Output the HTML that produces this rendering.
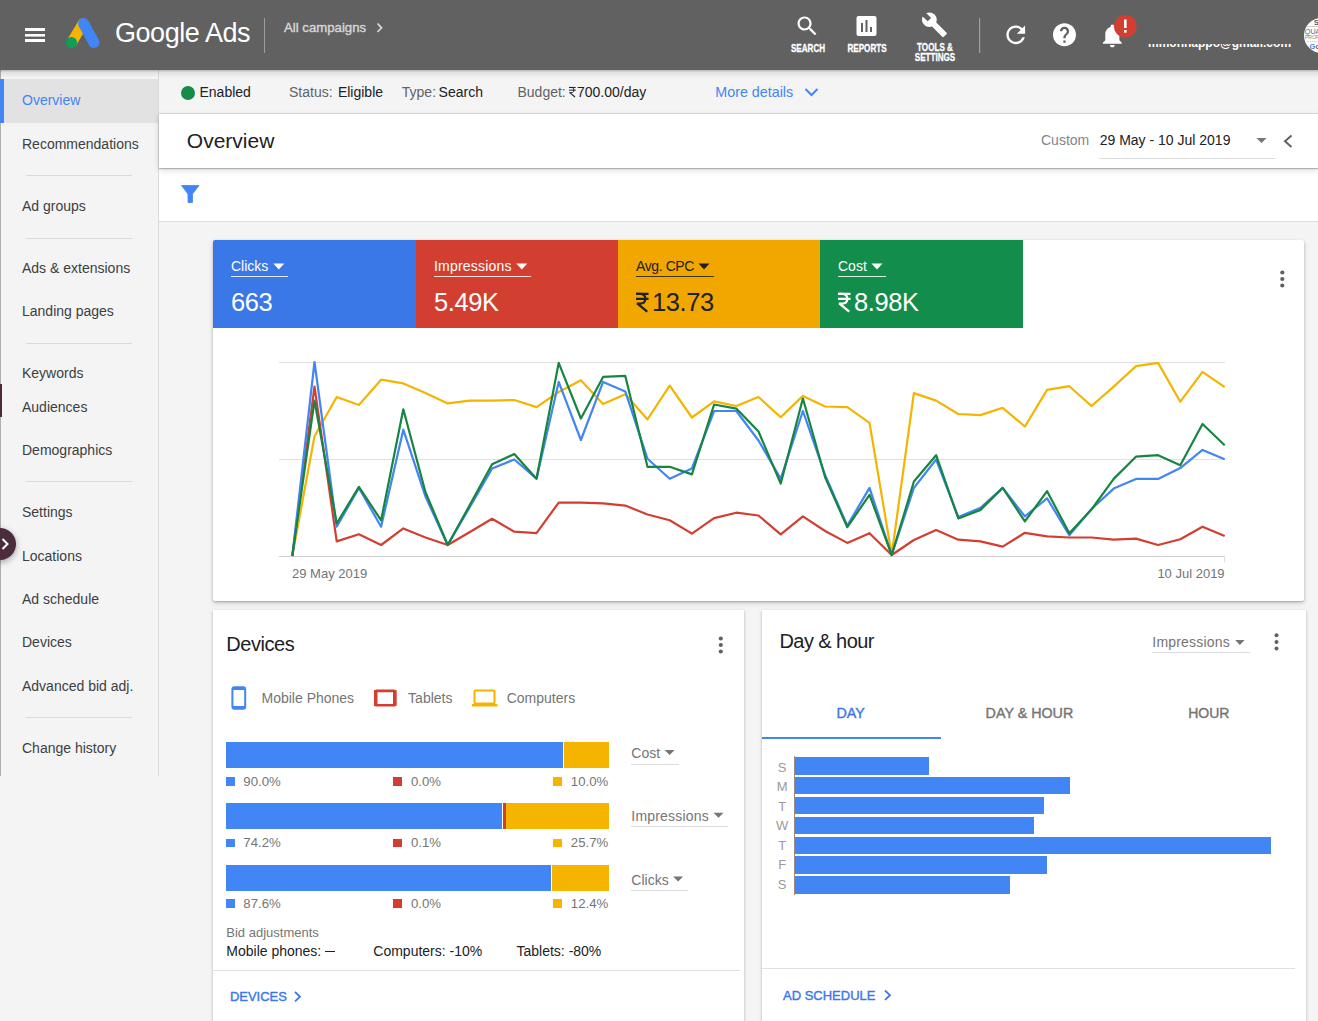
<!DOCTYPE html>
<html><head><meta charset="utf-8">
<style>
*{margin:0;padding:0;box-sizing:border-box}
html,body{width:1318px;height:1021px;overflow:hidden;background:#f4f4f4;font-family:"Liberation Sans",sans-serif;color:#202124;position:relative}
.a{position:absolute;white-space:nowrap;line-height:1}
.r{position:absolute}
.a,svg{z-index:3}
svg{position:absolute;overflow:visible}
</style></head>
<body>
<div class="r" style="left:0px;top:0px;width:1318px;height:70px;background:#616161;"></div>
<svg style="left:0;top:0" width="1318" height="70">
<rect x="25" y="28" width="20" height="3" fill="#fff"/>
<rect x="25" y="34" width="20" height="2.6" fill="#fff"/>
<rect x="25" y="39" width="20" height="3" fill="#fff"/>
<line x1="72" y1="42" x2="83" y2="23.5" stroke="#f4b400" stroke-width="10.5" stroke-linecap="round"/>
<line x1="83.5" y1="23.5" x2="94" y2="42.5" stroke="#4285f4" stroke-width="11" stroke-linecap="round"/>
<circle cx="71.5" cy="42.5" r="5.5" fill="#0f9d58"/>
<rect x="264" y="18" width="1" height="35" fill="#a39aa0"/>
<polyline points="377.5,23.5 381.5,27.8 377.5,32" fill="none" stroke="#d6d6d6" stroke-width="1.8"/>
<rect x="979" y="18" width="1.2" height="35" fill="#a39aa0"/>
<!-- search -->
<path transform="translate(794.3,13.2) scale(1.08)" fill="#fff" d="M15.5 14h-.79l-.28-.27C15.41 12.59 16 11.11 16 9.5 16 5.91 13.09 3 9.5 3S3 5.91 3 9.5 5.91 16 9.5 16c1.61 0 3.09-.59 4.23-1.57l.27.28v.79l5 4.99L20.49 19l-4.99-5zm-6 0C7.01 14 5 11.990 5 9.5S7.01 5 9.5 5 14 7.01 14 9.5 11.99 14 9.5 14z"/>
<!-- reports -->
<rect x="856.5" y="16" width="20" height="20" rx="2" fill="#fff"/>
<rect x="861" y="23" width="2" height="9" fill="#616161"/>
<rect x="865.5" y="20" width="2" height="12" fill="#616161"/>
<rect x="870" y="27" width="2" height="5" fill="#616161"/>
<!-- wrench -->
<path transform="translate(920.9,11.2) scale(1.13)" fill="#fff" d="M22.7 19l-9.1-9.1c.9-2.3.4-5-1.5-6.9-2-2-5-2.4-7.4-1.3L9 6 6 9 1.6 4.7C.4 7.1.9 10.1 2.9 12.1c1.9 1.9 4.6 2.4 6.9 1.5l9.1 9.1c.4.4 1 .4 1.4 0l2.3-2.3c.5-.4.5-1.1.1-1.4z"/>
<!-- refresh -->
<path transform="translate(1001.7,20.8) scale(1.17)" fill="#fff" d="M17.65 6.35C16.2 4.9 14.21 4 12 4c-4.42 0-7.99 3.58-7.99 8s3.57 8 7.99 8c3.73 0 6.84-2.55 7.73-6h-2.08c-.82 2.33-3.04 4-5.65 4-3.31 0-6-2.69-6-6s2.690-6 6-6c1.66 0 3.14.69 4.22 1.78L13 11h7V4l-2.35 2.35z"/>
<!-- help -->
<path transform="translate(1050.7,21) scale(1.15)" fill="#fff" d="M12 2C6.48 2 2 6.48 2 12s4.48 10 10 10 10-4.48 10-10S17.52 2 12 2zm1 17h-2v-2h2v2zm2.07-7.75l-.9.92C13.45 12.9 13 13.5 13 15h-2v-.5c0-1.1.45-2.1 1.17-2.83l1.24-1.26c.37-.36.59-.86.59-1.41 0-1.1-.9-2-2-2s-2 .9-2 2H8c0-2.21 1.79-4 4-4s4 1.79 4 4c0 .88-.36 1.68-.93 2.25z"/>
<!-- bell -->
<path transform="translate(1098.3,21.5) scale(1.17)" fill="#fff" d="M12 22c1.1 0 2-.9 2-2h-4c0 1.1.89 2 2 2zm6-6v-5c0-3.07-1.64-5.64-4.5-6.32V4c0-.83-.67-1.5-1.5-1.5s-1.5.67-1.5 1.5v.68C7.63 5.36 6 7.92 6 11v5l-2 2v1h16v-1l-2-2z"/>
<circle cx="1125.3" cy="26.2" r="11.3" fill="#d23f31"/>
<rect x="1124" y="19.5" width="2.6" height="8.5" fill="#fff"/>
<rect x="1124" y="30" width="2.6" height="2.6" fill="#fff"/>
<!-- avatar -->
<clipPath id="av"><circle cx="1321.6" cy="35.4" r="17.6"/></clipPath><circle cx="1321.6" cy="35.4" r="17.6" fill="#fff"/><g clip-path="url(#av)" font-family="Liberation Sans"><text x="1314" y="24.6" font-size="7" font-weight="bold" fill="#5a5058">S</text><rect x="1306" y="26" width="14" height="0.8" fill="#c8c0c8"/><text x="1304.8" y="34" font-size="7.2" fill="#6a6068">QUA</text><text x="1305" y="39.4" font-size="5" fill="#888">PROFE</text><rect x="1306" y="41" width="14" height="0.6" fill="#ccc"/><text x="1309.5" y="48.7" font-size="7.5" font-weight="bold" fill="#4285f4">G</text><text x="1315.5" y="48.7" font-size="7.5" font-weight="bold" fill="#d23f31">o</text></g>
</svg>
<div class="a" style="left:115.00px;top:20.14px;font-size:27px;color:#fff;letter-spacing:-0.45px;">Google Ads</div>
<div class="a" style="left:284.00px;top:21.12px;font-size:13.2px;color:#d6d6d6;-webkit-text-stroke:0.4px currentColor;">All campaigns</div>
<div class="a" style="left:808.00px;top:44.13px;font-size:10px;color:#fff;font-weight:bold;transform:translateX(-50%) scaleX(0.81);-webkit-text-stroke:0.3px #fff;">SEARCH</div>
<div class="a" style="left:866.70px;top:44.13px;font-size:10px;color:#fff;font-weight:bold;transform:translateX(-50%) scaleX(0.81);-webkit-text-stroke:0.3px #fff;">REPORTS</div>
<div class="a" style="left:935.00px;top:43.43px;font-size:10px;color:#fff;font-weight:bold;transform:translateX(-50%) scaleX(0.81);-webkit-text-stroke:0.3px #fff;">TOOLS &amp;</div>
<div class="a" style="left:934.70px;top:53.33px;font-size:10px;color:#fff;font-weight:bold;transform:translateX(-50%) scaleX(0.81);-webkit-text-stroke:0.3px #fff;">SETTINGS</div>
<div class="r" style="left:1148px;top:43.5px;width:145px;height:8px;overflow:hidden"><div class="a" style="left:0;top:-6.66px;font-size:12px;font-weight:bold;color:#fff">mmohnappo@gmail.com</div></div>
<div class="r" style="left:0px;top:70px;width:159px;height:706px;background:#f4f4f4;border-right:1px solid #dadada;"></div>
<div class="r" style="left:0px;top:70px;width:1px;height:706px;background:#b0b0b0;"></div>
<div class="r" style="left:0px;top:79px;width:158px;height:44px;background:#e2e2e2;"></div>
<div class="r" style="left:0px;top:384px;width:1.5px;height:33px;background:#4a2c3c;"></div>
<div class="r" style="left:0px;top:79px;width:4px;height:44px;background:#4285f4;"></div>
<div class="a" style="left:22.00px;top:93.45px;font-size:14px;color:#4285f4;">Overview</div>
<div class="a" style="left:22.00px;top:137.15px;font-size:14px;color:#3c4043;">Recommendations</div>
<div class="a" style="left:22.00px;top:199.15px;font-size:14px;color:#3c4043;">Ad groups</div>
<div class="a" style="left:22.00px;top:261.15px;font-size:14px;color:#3c4043;">Ads &amp; extensions</div>
<div class="a" style="left:22.00px;top:304.15px;font-size:14px;color:#3c4043;">Landing pages</div>
<div class="a" style="left:22.00px;top:366.15px;font-size:14px;color:#3c4043;">Keywords</div>
<div class="a" style="left:22.00px;top:400.15px;font-size:14px;color:#3c4043;">Audiences</div>
<div class="a" style="left:22.00px;top:443.15px;font-size:14px;color:#3c4043;">Demographics</div>
<div class="a" style="left:22.00px;top:505.15px;font-size:14px;color:#3c4043;">Settings</div>
<div class="a" style="left:22.00px;top:549.15px;font-size:14px;color:#3c4043;">Locations</div>
<div class="a" style="left:22.00px;top:592.15px;font-size:14px;color:#3c4043;">Ad schedule</div>
<div class="a" style="left:22.00px;top:635.15px;font-size:14px;color:#3c4043;">Devices</div>
<div class="a" style="left:22.00px;top:679.15px;font-size:14px;color:#3c4043;">Advanced bid adj.</div>
<div class="a" style="left:22.00px;top:741.15px;font-size:14px;color:#3c4043;">Change history</div>
<div class="r" style="left:26px;top:175px;width:106px;height:1px;background:#dadada;"></div>
<div class="r" style="left:26px;top:238px;width:106px;height:1px;background:#dadada;"></div>
<div class="r" style="left:26px;top:343px;width:106px;height:1px;background:#dadada;"></div>
<div class="r" style="left:26px;top:481px;width:106px;height:1px;background:#dadada;"></div>
<div class="r" style="left:26px;top:717px;width:106px;height:1px;background:#dadada;"></div>
<div class="r" style="left:-16px;top:528px;width:32px;height:32px;border-radius:50%;background:#4a2c3c;box-shadow:0 2px 6px rgba(0,0,0,.35)"></div>
<svg style="left:0;top:0" width="20" height="600"><polyline points="2.5,539 7.5,544 2.5,549" fill="none" stroke="#fff" stroke-width="2"/></svg>
<div class="r" style="left:159px;top:70px;width:1159px;height:44px;background:#f4f4f4;border-bottom:1px solid #dcdcdc;"></div>
<div class="r" style="left:0;top:70px;width:1318px;height:8px;background:linear-gradient(rgba(0,0,0,.25),rgba(0,0,0,.08) 30%,rgba(0,0,0,0))"></div>
<div class="r" style="left:181px;top:86px;width:14px;height:14px;border-radius:50%;background:#188a4a"></div>
<div class="a" style="left:199.50px;top:84.75px;font-size:14px;color:#202124;">Enabled</div>
<div class="a" style="left:289.00px;top:84.75px;font-size:14px;color:#5f6368;">Status:</div>
<div class="a" style="left:337.90px;top:84.75px;font-size:14px;color:#202124;">Eligible</div>
<div class="a" style="left:401.80px;top:84.75px;font-size:14px;color:#5f6368;">Type:</div>
<div class="a" style="left:438.60px;top:84.75px;font-size:14px;color:#202124;">Search</div>
<div class="a" style="left:517.50px;top:84.75px;font-size:14px;color:#5f6368;">Budget:</div>
<div class="a" style="left:715.30px;top:85.39px;font-size:14.3px;color:#4285f4;">More details</div>
<svg style="left:0;top:0" width="1318" height="200"><polyline points="805.5,89 811.5,95 817.5,89" fill="none" stroke="#4285f4" stroke-width="2"/></svg>
<div class="r" style="left:159px;top:114px;width:1159px;height:54px;background:#fff;box-shadow:0 1px 1px rgba(0,0,0,.22),0 2px 6px rgba(0,0,0,.16);z-index:2;"></div>
<div class="a" style="left:186.80px;top:130.42px;font-size:21px;color:#202124;">Overview</div>
<div class="a" style="left:1041.00px;top:133.15px;font-size:14px;color:#80868b;">Custom</div>
<div class="a" style="left:1099.70px;top:133.15px;font-size:14px;color:#202124;">29 May - 10 Jul 2019</div>
<div class="r" style="left:1099px;top:158px;width:176px;height:1px;background:#dadce0;z-index:3;"></div>
<svg style="left:0;top:0" width="1318" height="200"><polygon points="1256.5,138 1266.5,138 1261.5,143" fill="#757575"/><polyline points="1291.5,135.5 1285,141.2 1291.5,147" fill="none" stroke="#5f6368" stroke-width="2"/></svg>
<div class="r" style="left:159px;top:168px;width:1159px;height:54px;background:#fff;border-bottom:1px solid #dcdcdc;"></div>
<svg style="left:0;top:0" width="1318" height="300"><path d="M181.5,185.5 L199,185.5 L192.5,194 L192.5,202.5 L188,202.5 L188,194 Z" fill="#4285f4" stroke="#4285f4" stroke-width="0.8" stroke-linejoin="round"/></svg>
<div class="r" style="left:213px;top:240px;width:1091px;height:361px;background:#fff;border-radius:2px;box-shadow:0 1px 2px rgba(0,0,0,.2),0 2px 5px rgba(0,0,0,.18)"></div>
<div class="r" style="left:213px;top:240px;width:203px;height:88px;background:#3b78e7;border-radius:2px 0 0 0;"></div>
<div class="a" style="left:231.00px;top:259.15px;font-size:14px;color:#fff;">Clicks</div>
<svg style="left:0;top:0" width="1" height="1"><polygon points="273.3,263.5 284.3,263.5 278.8,269.5" fill="#fff"/></svg>
<div class="r" style="left:231px;top:276px;width:57px;height:1px;background:#fff;opacity:.85;"></div>
<div class="a" style="left:231.00px;top:290.11px;font-size:25.5px;color:#fff;letter-spacing:-0.4px;">663</div>
<div class="r" style="left:416px;top:240px;width:202px;height:88px;background:#d23f31;"></div>
<div class="a" style="left:434.00px;top:259.15px;font-size:14px;color:#fff;letter-spacing:0.2px;">Impressions</div>
<svg style="left:0;top:0" width="1" height="1"><polygon points="516.3,263.5 527.3,263.5 521.8,269.5" fill="#fff"/></svg>
<div class="r" style="left:434px;top:276px;width:97px;height:1px;background:#fff;opacity:.85;"></div>
<div class="a" style="left:434.00px;top:290.11px;font-size:25.5px;color:#fff;letter-spacing:-0.4px;">5.49K</div>
<div class="r" style="left:618px;top:240px;width:202px;height:88px;background:#f2a600;"></div>
<div class="a" style="left:636.00px;top:259.15px;font-size:14px;color:#202124;letter-spacing:-0.4px;">Avg. CPC</div>
<svg style="left:0;top:0" width="1" height="1"><polygon points="698.5,263.5 709.5,263.5 704.0,269.5" fill="#202124"/></svg>
<div class="r" style="left:636px;top:276px;width:78px;height:1px;background:#202124;opacity:.85;"></div>
<svg style="left:636.00px;top:293.00px" width="12.53" height="18.70" viewBox="0 0 67 100"><path d="M0,4.5H67M0,31.5H67" stroke="#202124" stroke-width="11.5" fill="none"/><path d="M0,4.5H22C42,4.5 50,16 50,31C50,47 40,57 22,57H4" stroke="#202124" stroke-width="11.5" fill="none"/><path d="M8,57L60,100" stroke="#202124" stroke-width="12.7" fill="none"/></svg>
<div class="a" style="left:652.00px;top:290.11px;font-size:25.5px;color:#202124;letter-spacing:-0.4px;">13.73</div>
<div class="r" style="left:820px;top:240px;width:203px;height:88px;background:#138d4c;"></div>
<div class="a" style="left:838.00px;top:259.15px;font-size:14px;color:#fff;">Cost</div>
<svg style="left:0;top:0" width="1" height="1"><polygon points="871.5,263.5 882.5,263.5 877.0,269.5" fill="#fff"/></svg>
<div class="r" style="left:838px;top:276px;width:48px;height:1px;background:#fff;opacity:.85;"></div>
<svg style="left:838.00px;top:293.00px" width="12.53" height="18.70" viewBox="0 0 67 100"><path d="M0,4.5H67M0,31.5H67" stroke="#fff" stroke-width="11.5" fill="none"/><path d="M0,4.5H22C42,4.5 50,16 50,31C50,47 40,57 22,57H4" stroke="#fff" stroke-width="11.5" fill="none"/><path d="M8,57L60,100" stroke="#fff" stroke-width="12.7" fill="none"/></svg>
<div class="a" style="left:854.00px;top:290.11px;font-size:25.5px;color:#fff;letter-spacing:-0.4px;">8.98K</div>
<svg style="left:0;top:0" width="1" height="1"><circle cx="1282.3" cy="272.5" r="2.1" fill="#616161"/><circle cx="1282.3" cy="279" r="2.1" fill="#616161"/><circle cx="1282.3" cy="285.5" r="2.1" fill="#616161"/></svg>
<svg style="left:0;top:0" width="1" height="1"><rect x="279" y="362" width="946" height="1" fill="#e0e0e0"/><rect x="279" y="459" width="946" height="1" fill="#e0e0e0"/><rect x="279" y="556" width="946" height="1" fill="#d0d0d0"/><rect x="1224" y="555.5" width="1" height="7" fill="#e0e0e0"/><polyline points="292.3,556.0 314.5,436.2 336.7,397.0 358.9,405.0 381.1,379.7 403.3,383.4 425.5,393.0 447.7,403.4 469.9,400.6 492.1,400.6 514.3,400.0 536.5,407.1 558.7,392.0 580.9,380.2 603.1,403.9 625.3,394.2 647.5,419.4 669.7,385.6 691.9,417.5 714.1,401.3 736.3,406.0 758.5,397.0 780.7,417.2 802.9,395.9 825.1,406.5 847.3,407.1 869.5,422.8 891.7,555.0 913.9,393.1 936.1,400.6 958.3,414.0 980.5,415.1 1002.7,407.8 1024.9,426.5 1047.1,389.9 1069.3,386.2 1091.5,406.0 1113.7,386.6 1135.9,366.2 1158.1,362.9 1180.3,401.7 1202.5,371.9 1224.7,387.1" fill="none" stroke="#f4b400" stroke-width="2.2" stroke-linejoin="round"/><polyline points="292.3,556.0 314.5,386.6 336.7,541.4 358.9,534.3 381.1,545.0 403.3,528.4 425.5,537.5 447.7,545.0 469.9,532.0 492.1,518.8 514.3,531.7 536.5,533.2 558.7,502.6 580.9,502.6 603.1,503.4 625.3,505.6 647.5,514.5 669.7,520.3 691.9,533.6 714.1,518.1 736.3,512.7 758.5,515.5 780.7,534.3 802.9,516.4 825.1,531.0 847.3,542.9 869.5,533.2 891.7,555.0 913.9,540.0 936.1,530.0 958.3,539.7 980.5,541.4 1002.7,546.6 1024.9,532.8 1047.1,536.4 1069.3,537.5 1091.5,537.5 1113.7,539.7 1135.9,538.6 1158.1,545.0 1180.3,539.2 1202.5,526.7 1224.7,536.1" fill="none" stroke="#d23f31" stroke-width="2.2" stroke-linejoin="round"/><polyline points="292.3,556.0 314.5,362.0 336.7,526.7 358.9,488.0 381.1,526.7 403.3,429.7 425.5,496.6 447.7,545.0 469.9,507.0 492.1,468.5 514.3,459.5 536.5,478.7 558.7,381.9 580.9,440.0 603.1,381.9 625.3,391.4 647.5,458.8 669.7,478.7 691.9,468.5 714.1,411.0 736.3,411.0 758.5,440.5 780.7,478.9 802.9,411.0 825.1,475.0 847.3,525.6 869.5,487.9 891.7,555.0 913.9,487.9 936.1,459.5 958.3,517.0 980.5,507.8 1002.7,487.9 1024.9,516.4 1047.1,498.3 1069.3,535.3 1091.5,509.0 1113.7,488.6 1135.9,478.9 1158.1,478.9 1180.3,468.1 1202.5,449.9 1224.7,459.3" fill="none" stroke="#4285f4" stroke-width="2.2" stroke-linejoin="round"/><polyline points="292.3,556.0 314.5,400.6 336.7,523.5 358.9,486.9 381.1,520.3 403.3,409.3 425.5,492.2 447.7,545.0 469.9,504.8 492.1,464.2 514.3,454.1 536.5,478.7 558.7,362.9 580.9,418.5 603.1,376.9 625.3,375.9 647.5,466.8 669.7,466.8 691.9,474.4 714.1,404.5 736.3,408.6 758.5,431.5 780.7,483.6 802.9,398.5 825.1,477.2 847.3,527.2 869.5,494.8 891.7,555.0 913.9,481.5 936.1,455.2 958.3,518.5 980.5,509.9 1002.7,487.9 1024.9,521.3 1047.1,491.2 1069.3,533.2 1091.5,509.5 1113.7,478.9 1135.9,456.7 1158.1,455.2 1180.3,465.3 1202.5,424.0 1224.7,445.2" fill="none" stroke="#178542" stroke-width="2.2" stroke-linejoin="round"/></svg>
<div class="a" style="left:292.00px;top:566.99px;font-size:13px;color:#70757a;">29 May 2019</div>
<div class="a" style="right:93.40px;top:566.99px;font-size:13px;color:#70757a;">10 Jul 2019</div>
<svg style="left:569.00px;top:86.60px" width="6.70" height="10.00" viewBox="0 0 67 100"><path d="M0,4.5H67M0,31.5H67" stroke="#202124" stroke-width="10" fill="none"/><path d="M0,4.5H22C42,4.5 50,16 50,31C50,47 40,57 22,57H4" stroke="#202124" stroke-width="10" fill="none"/><path d="M8,57L60,100" stroke="#202124" stroke-width="11.0" fill="none"/></svg>
<div class="a" style="left:577.00px;top:84.75px;font-size:14px;color:#202124;">700.00/day</div>
<div class="r" style="left:213px;top:610px;width:531px;height:420px;background:#fff;box-shadow:0 1px 2px rgba(0,0,0,.2),0 1px 4px rgba(0,0,0,.12)"></div>
<div class="r" style="left:761.5px;top:610px;width:544.5px;height:420px;background:#fff;box-shadow:0 1px 2px rgba(0,0,0,.2),0 1px 4px rgba(0,0,0,.12)"></div>
<div class="a" style="left:226.30px;top:634.07px;font-size:20px;color:#202124;letter-spacing:-0.44px;">Devices</div>
<svg style="left:0;top:0" width="1" height="1"><circle cx="720.8" cy="638.5" r="2.1" fill="#616161"/><circle cx="720.8" cy="645" r="2.1" fill="#616161"/><circle cx="720.8" cy="651.5" r="2.1" fill="#616161"/></svg>
<svg style="left:0;top:0" width="1" height="1"><rect x="232.4" y="687.2" width="12.8" height="21.5" rx="2" fill="none" stroke="#4285f4" stroke-width="2"/><rect x="232.4" y="688" width="12.8" height="2" fill="#4285f4"/><rect x="232.4" y="706" width="12.8" height="2.2" fill="#4285f4"/><rect x="375.3" y="690.9" width="19.8" height="14.4" rx="1.5" fill="none" stroke="#d23f31" stroke-width="2.6"/><rect x="374" y="690" width="3.5" height="16" fill="#d23f31"/><rect x="393" y="690" width="3.5" height="16" fill="#d23f31"/><rect x="474.5" y="690.5" width="20" height="13" rx="1" fill="none" stroke="#f4b400" stroke-width="2"/><rect x="472" y="704" width="25.5" height="2.5" fill="#f4b400"/></svg>
<div class="a" style="left:261.50px;top:691.15px;font-size:14px;color:#757575;">Mobile Phones</div>
<div class="a" style="left:408.10px;top:691.15px;font-size:14px;color:#757575;">Tablets</div>
<div class="a" style="left:506.70px;top:691.15px;font-size:14px;color:#757575;">Computers</div>
<div class="r" style="left:226.3px;top:741.8px;width:336.7px;height:26px;background:#4285f4;"></div>
<div class="r" style="left:564px;top:741.8px;width:44.9px;height:26px;background:#f4b400;"></div>
<div class="r" style="left:226.3px;top:777px;width:8.5px;height:8.5px;background:#4285f4;"></div>
<div class="a" style="left:243.30px;top:774.82px;font-size:13.2px;color:#757575;">90.0%</div>
<div class="r" style="left:393.3px;top:777px;width:8.5px;height:8.5px;background:#d23f31;"></div>
<div class="a" style="left:411.00px;top:774.82px;font-size:13.2px;color:#757575;">0.0%</div>
<div class="r" style="left:553.2px;top:777px;width:8.5px;height:8.5px;background:#f4b400;"></div>
<div class="a" style="right:709.80px;top:774.82px;font-size:13.2px;color:#757575;">10.0%</div>
<div class="a" style="left:631.30px;top:746.15px;font-size:14px;color:#757575;">Cost</div>
<svg style="left:0;top:0" width="1" height="1"><polygon points="664.6,750 674.6,750 669.6,755" fill="#757575"/></svg>
<div class="r" style="left:631px;top:763.6px;width:48.1px;height:1px;background:#dadce0;"></div>
<div class="r" style="left:226.3px;top:803px;width:275.5px;height:26px;background:#4285f4;"></div>
<div class="r" style="left:502.9px;top:803px;width:3.2px;height:26px;background:#d23f31;"></div>
<div class="r" style="left:506.1px;top:803px;width:102.8px;height:26px;background:#f4b400;"></div>
<div class="r" style="left:226.3px;top:838.6px;width:8.5px;height:8.5px;background:#4285f4;"></div>
<div class="a" style="left:243.30px;top:836.42px;font-size:13.2px;color:#757575;">74.2%</div>
<div class="r" style="left:393.3px;top:838.6px;width:8.5px;height:8.5px;background:#d23f31;"></div>
<div class="a" style="left:411.00px;top:836.42px;font-size:13.2px;color:#757575;">0.1%</div>
<div class="r" style="left:553.2px;top:838.6px;width:8.5px;height:8.5px;background:#f4b400;"></div>
<div class="a" style="right:709.80px;top:836.42px;font-size:13.2px;color:#757575;">25.7%</div>
<div class="a" style="left:631.30px;top:808.85px;font-size:14px;color:#757575;letter-spacing:0.2px;">Impressions</div>
<svg style="left:0;top:0" width="1" height="1"><polygon points="713.5,812.7 723.5,812.7 718.5,817.7" fill="#757575"/></svg>
<div class="r" style="left:631px;top:826.4px;width:97.0px;height:1px;background:#dadce0;"></div>
<div class="r" style="left:226.3px;top:865px;width:324.4px;height:26px;background:#4285f4;"></div>
<div class="r" style="left:552px;top:865px;width:56.9px;height:26px;background:#f4b400;"></div>
<div class="r" style="left:226.3px;top:899.3px;width:8.5px;height:8.5px;background:#4285f4;"></div>
<div class="a" style="left:243.30px;top:897.12px;font-size:13.2px;color:#757575;">87.6%</div>
<div class="r" style="left:393.3px;top:899.3px;width:8.5px;height:8.5px;background:#d23f31;"></div>
<div class="a" style="left:411.00px;top:897.12px;font-size:13.2px;color:#757575;">0.0%</div>
<div class="r" style="left:553.2px;top:899.3px;width:8.5px;height:8.5px;background:#f4b400;"></div>
<div class="a" style="right:709.80px;top:897.12px;font-size:13.2px;color:#757575;">12.4%</div>
<div class="a" style="left:631.30px;top:872.75px;font-size:14px;color:#757575;">Clicks</div>
<svg style="left:0;top:0" width="1" height="1"><polygon points="673.1,876.6 683.1,876.6 678.1,881.6" fill="#757575"/></svg>
<div class="r" style="left:631px;top:890.3px;width:56.6px;height:1px;background:#dadce0;"></div>
<div class="a" style="left:226.30px;top:925.59px;font-size:13px;color:#757575;">Bid adjustments</div>
<div class="a" style="left:226.30px;top:943.85px;font-size:14px;color:#202124;">Mobile phones: <span style='display:inline-block;width:9.5px;height:1px;background:#202124;vertical-align:4px'></span></div>
<div class="a" style="left:373.30px;top:943.85px;font-size:14px;color:#202124;">Computers: -10%</div>
<div class="a" style="left:516.50px;top:943.85px;font-size:14px;color:#202124;">Tablets: -80%</div>
<div class="r" style="left:213px;top:970px;width:527px;height:1px;background:#e0e0e0;"></div>
<div class="a" style="left:229.90px;top:990.49px;font-size:13px;color:#3b78e7;-webkit-text-stroke:0.4px currentColor;">DEVICES</div>
<svg style="left:0;top:0" width="1" height="1"><polyline points="295,992 300,996.7 295,1001.4" fill="none" stroke="#3b78e7" stroke-width="1.8"/></svg>
<div class="a" style="left:779.50px;top:631.27px;font-size:20px;color:#202124;letter-spacing:-0.57px;">Day &amp; hour</div>
<div class="a" style="left:1152.30px;top:634.65px;font-size:14px;color:#757575;letter-spacing:0.2px;">Impressions</div>
<svg style="left:0;top:0" width="1" height="1"><polygon points="1235.2,640 1244.6,640 1239.9,645" fill="#757575"/><circle cx="1276.5" cy="635.3" r="2" fill="#616161"/><circle cx="1276.5" cy="641.9" r="2" fill="#616161"/><circle cx="1276.5" cy="648.5" r="2" fill="#616161"/></svg>
<div class="r" style="left:1152px;top:651.5px;width:98px;height:1px;background:#dadce0;"></div>
<div class="a" style="left:836.50px;top:706.09px;font-size:14.3px;color:#3b78e7;-webkit-text-stroke:0.4px currentColor;">DAY</div>
<div class="a" style="left:985.60px;top:706.09px;font-size:14.3px;color:#757575;-webkit-text-stroke:0.4px currentColor;">DAY &amp; HOUR</div>
<div class="a" style="left:1188.20px;top:706.35px;font-size:14px;color:#757575;-webkit-text-stroke:0.4px currentColor;">HOUR</div>
<div class="r" style="left:761.5px;top:737px;width:179.5px;height:2px;background:#4285f4;"></div>
<div class="r" style="left:794px;top:756px;width:1px;height:139px;background:#9e8a80;"></div>
<div class="r" style="left:795px;top:757.0px;width:133.6px;height:17.6px;background:#4285f4;"></div>
<div class="a" style="left:782.20px;transform:translateX(-50%);top:760.69px;font-size:13px;color:#9a9a9a;">S</div>
<div class="r" style="left:795px;top:776.88px;width:274.8px;height:17.6px;background:#4285f4;"></div>
<div class="a" style="left:782.20px;transform:translateX(-50%);top:780.21px;font-size:13px;color:#9a9a9a;">M</div>
<div class="r" style="left:795px;top:796.76px;width:249px;height:17.6px;background:#4285f4;"></div>
<div class="a" style="left:782.20px;transform:translateX(-50%);top:799.73px;font-size:13px;color:#9a9a9a;">T</div>
<div class="r" style="left:795px;top:816.64px;width:238.9px;height:17.6px;background:#4285f4;"></div>
<div class="a" style="left:782.20px;transform:translateX(-50%);top:819.25px;font-size:13px;color:#9a9a9a;">W</div>
<div class="r" style="left:795px;top:836.52px;width:475.7px;height:17.6px;background:#4285f4;"></div>
<div class="a" style="left:782.20px;transform:translateX(-50%);top:838.77px;font-size:13px;color:#9a9a9a;">T</div>
<div class="r" style="left:795px;top:856.4px;width:252px;height:17.6px;background:#4285f4;"></div>
<div class="a" style="left:782.20px;transform:translateX(-50%);top:858.29px;font-size:13px;color:#9a9a9a;">F</div>
<div class="r" style="left:795px;top:876.28px;width:214.7px;height:17.6px;background:#4285f4;"></div>
<div class="a" style="left:782.20px;transform:translateX(-50%);top:877.81px;font-size:13px;color:#9a9a9a;">S</div>
<div class="r" style="left:761.5px;top:968px;width:533.5px;height:1px;background:#e0e0e0;"></div>
<div class="a" style="left:783.00px;top:988.99px;font-size:13px;color:#3b78e7;-webkit-text-stroke:0.4px currentColor;">AD SCHEDULE</div>
<svg style="left:0;top:0" width="1" height="1"><polyline points="885,990.5 890,995.2 885,999.9" fill="none" stroke="#3b78e7" stroke-width="1.8"/></svg>
</body></html>
